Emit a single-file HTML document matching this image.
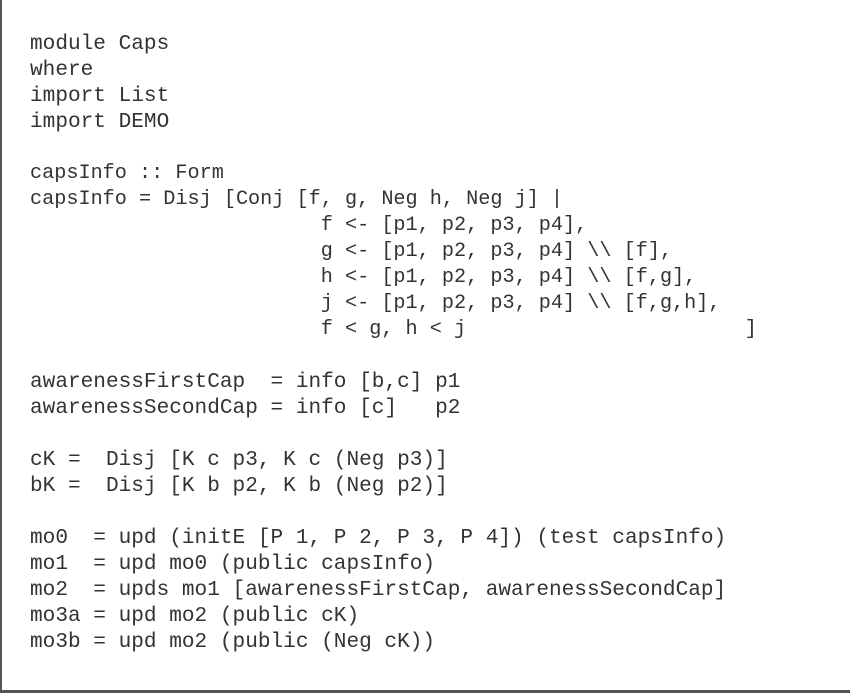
<!DOCTYPE html>
<html><head><style>
html,body{margin:0;padding:0;background:#fff;}
.box{position:absolute;left:0;top:0;width:848px;height:690px;border-left:2px solid #555;border-bottom:3px solid #555;border-right:1px solid #888;}
pre{position:absolute;left:30px;margin:0;font-family:"Liberation Mono",monospace;font-size:21.1px;line-height:26px;color:#333;}
pre.n{font-size:20.2px;}
</style></head><body>
<div class="box"></div>
<pre style="top:31px">module Caps
where
import List
import DEMO</pre>
<pre class="n" style="top:161px">capsInfo :: Form
capsInfo = Disj [Conj [f, g, Neg h, Neg j] |
                        f &lt;- [p1, p2, p3, p4],
                        g &lt;- [p1, p2, p3, p4] \\ [f],
                        h &lt;- [p1, p2, p3, p4] \\ [f,g],
                        j &lt;- [p1, p2, p3, p4] \\ [f,g,h],
                        f &lt; g, h &lt; j                       ]</pre>
<pre style="top:369px">awarenessFirstCap  = info [b,c] p1
awarenessSecondCap = info [c]   p2

cK =  Disj [K c p3, K c (Neg p3)]
bK =  Disj [K b p2, K b (Neg p2)]

mo0  = upd (initE [P 1, P 2, P 3, P 4]) (test capsInfo)
mo1  = upd mo0 (public capsInfo)
mo2  = upds mo1 [awarenessFirstCap, awarenessSecondCap]
mo3a = upd mo2 (public cK)
mo3b = upd mo2 (public (Neg cK))</pre>
</body></html>
